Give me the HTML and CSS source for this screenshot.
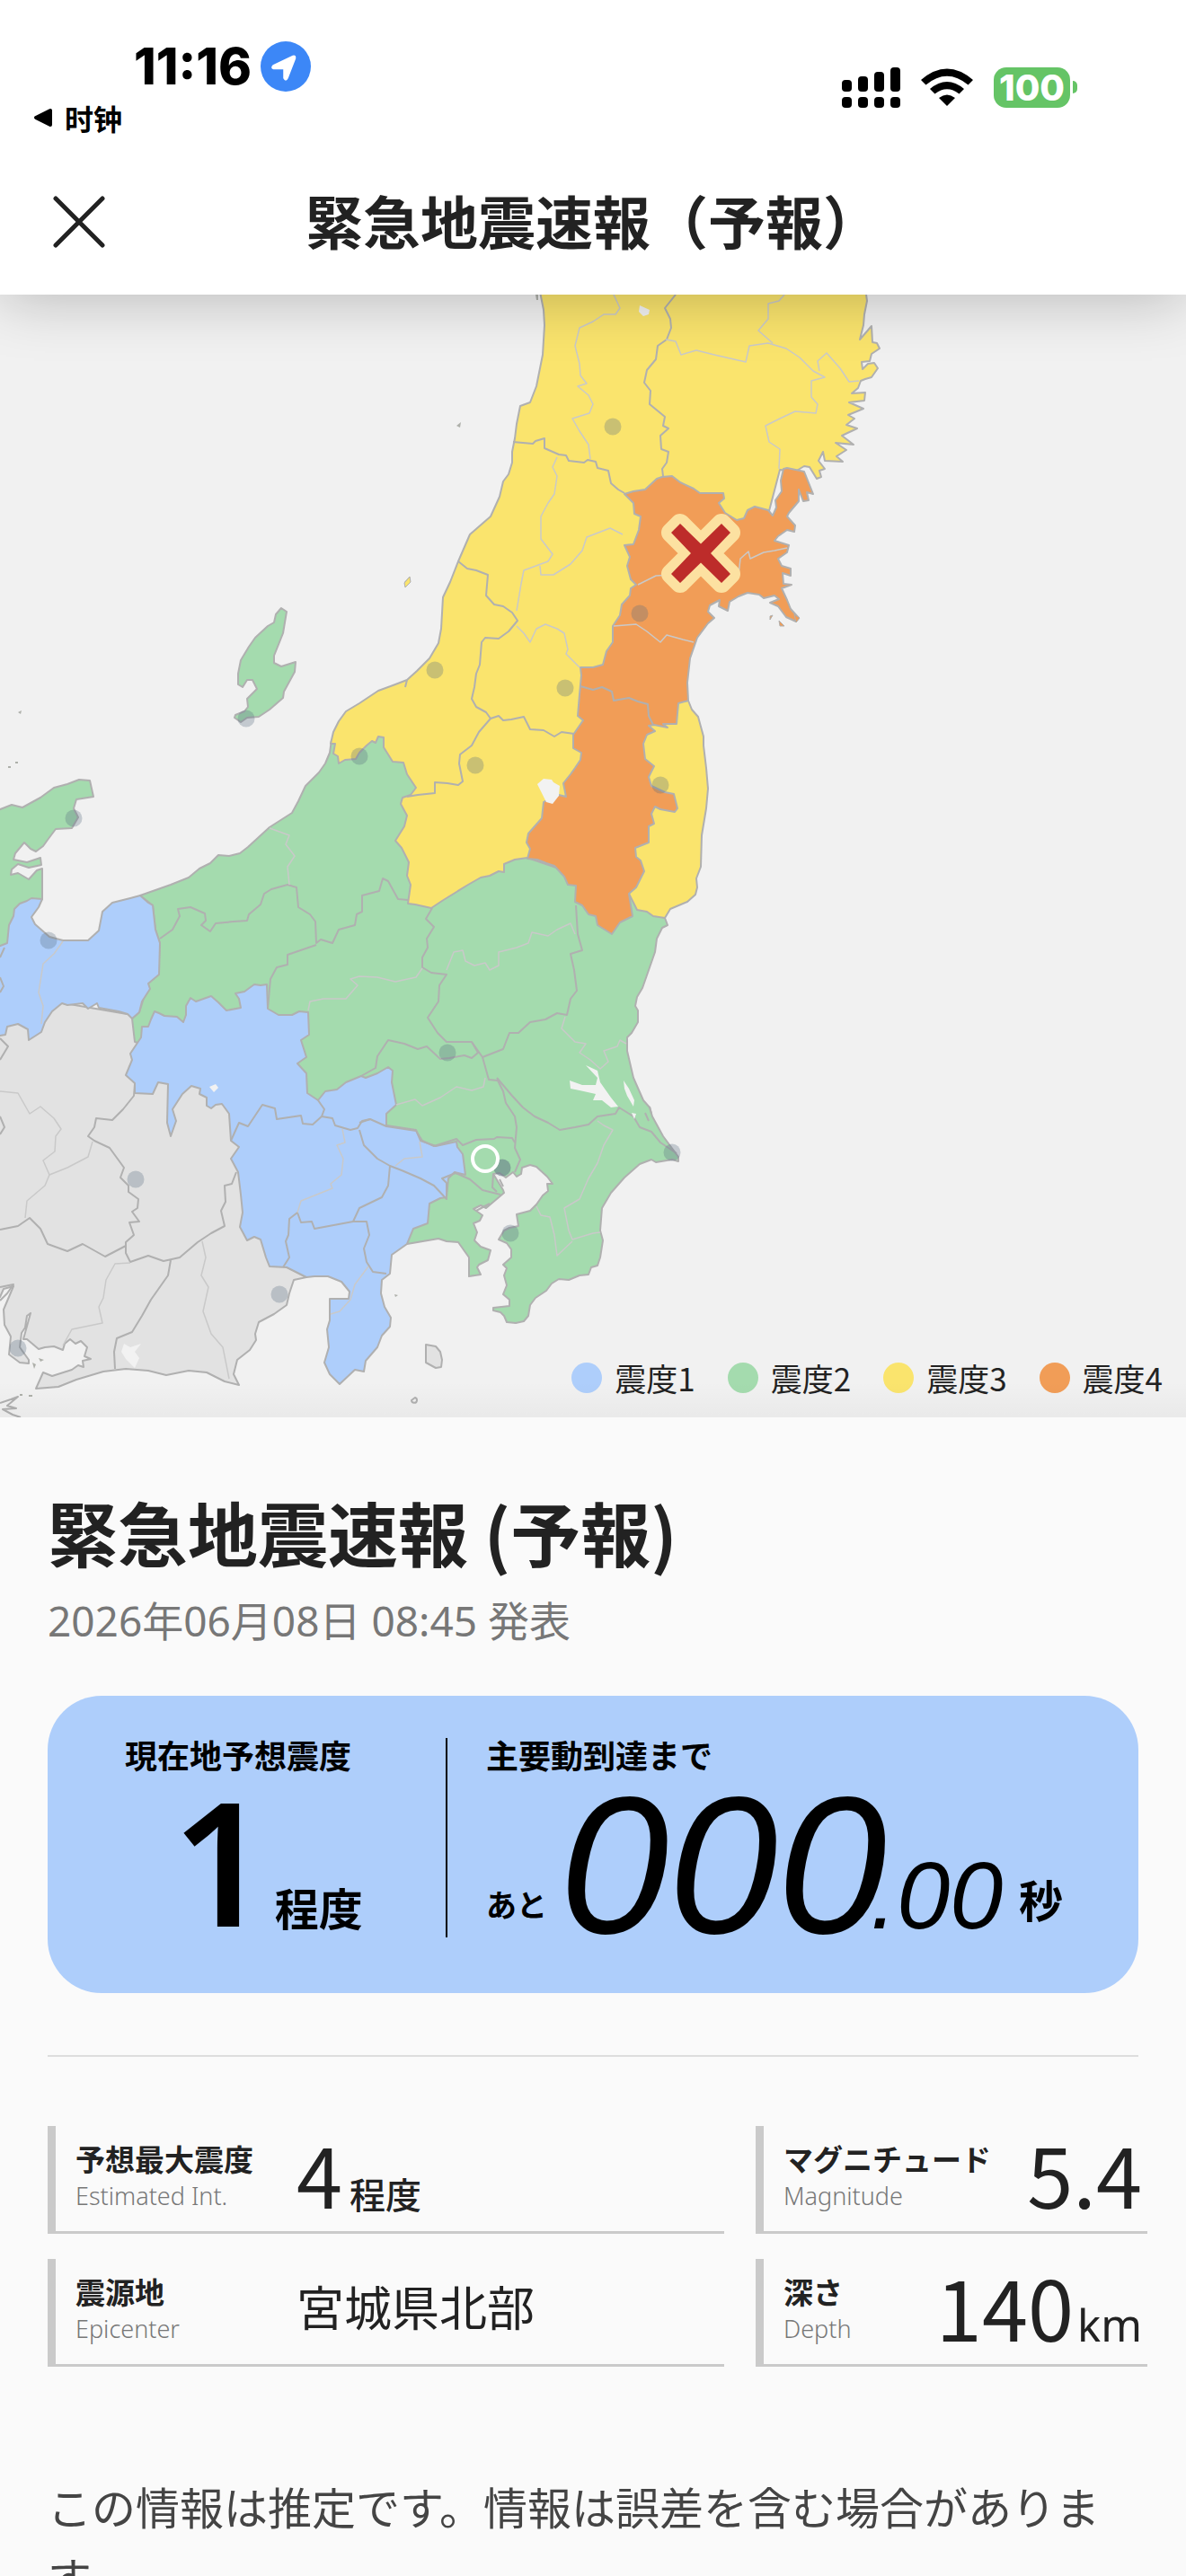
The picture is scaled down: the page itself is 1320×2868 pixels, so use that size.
FILE: index.html
```html
<!DOCTYPE html>
<html lang="ja">
<head>
<meta charset="utf-8">
<meta name="viewport" content="width=device-width, initial-scale=1">
<title>緊急地震速報（予報）</title>
<link rel="stylesheet" href="styles.css">
</head>
<body>
<div class="app">
  <header class="top">
    <div class="status">
      <div class="status-left">
        <div class="clock">
          <span class="time">11:16</span>
          <svg class="locate" viewBox="0 0 56 56" aria-hidden="true"><circle cx="28" cy="28" r="28" fill="#3c87f7"/><path d="M14 27 L36 16.500 Q39 15.500 38.500 19 L30 41 Q28 45 26 41 V30.500 H14.500 Q11.500 29.500 14 27Z" fill="#fff" stroke="#fff" stroke-width="1.500"/></svg>
        </div>
        <a class="back" href="#" lang="zh-Hans"><svg class="back-arrow" viewBox="0 0 22 22" aria-hidden="true"><path d="M3 11 L19 3 V19Z" stroke="#000" stroke-width="4" stroke-linejoin="round"/></svg>时钟</a>
      </div>
      <div class="status-right">
        <svg class="signal" viewBox="0 0 65 45" aria-hidden="true"><rect y="14" width="11" height="13" rx="4"/><rect x="18" y="10" width="11" height="17" rx="4"/><rect x="36" y="5" width="11" height="22" rx="4"/><rect x="54" width="11" height="27" rx="4"/><rect y="33" width="11" height="12" rx="4"/><rect x="18" y="33" width="11" height="12" rx="4"/><rect x="36" y="33" width="11" height="12" rx="4"/><rect x="54" y="33" width="11" height="12" rx="4"/></svg>
        <svg class="wifi" viewBox="0 0 58 43" aria-hidden="true"><path d="M0 13 Q29 -12 58 13 L52.500 18.500 Q29 -1 5.500 18.500Z"/><path d="M10 23 Q29 7 48 23 L42.500 28.500 Q29 18 15.500 28.500Z"/><path d="M20 33 Q29 26 38 33 L29 42Z"/></svg>
        <div class="battery"><span class="battery-level">100</span><span class="battery-tip"></span></div>
      </div>
    </div>
    <div class="titlebar">
      <button class="close" type="button" aria-label="閉じる"><svg viewBox="0 0 60 60" aria-hidden="true"><path d="M4 4 L56 56 M56 4 L4 56" stroke="#222" stroke-width="5" stroke-linecap="round"/></svg></button>
      <div class="title">緊急地震速報（予報）</div>
    </div>
  </header>

  <section class="map" aria-label="震度マップ">
    <svg class="map-canvas" viewBox="0 328 1320 1250" fill="none" stroke-linejoin="round" aria-hidden="true">
      <g stroke="#b0b0b0" stroke-width="2">
        <path fill="#e2e2e2" d="M-5 1130 60 1115 147 1130 250 1170 290 1230 290 1300 300 1400 341 1422 327 1425 322 1440 319 1453 305 1463 288 1472 284 1485 285 1492 278 1503 264 1514 260 1530 266 1542 250 1538 230 1528 210 1526 185 1531 165 1526 140 1524 115 1527 85 1536 65 1544 40 1546 48 1528 58 1532 80 1525 87 1520 93 1522 92 1515 101 1513 94 1510 97 1500 90 1493 84 1496 78 1491 72 1496 70 1503 60 1499 50 1500 43 1502 30 1491 26 1491 34 1462 30 1465 28 1478 24 1484 22 1500 32 1514 32 1518 22 1517 10 1508 12 1488 5 1475 4 1458 15 1432 4 1435 0 1444 -5 1444Z"/>
        <path fill="#a4dbae" d="M156 997 190 985 210 977 222 967 234 961 243 952 255 953 267 950 276 943 300 921 325 905 332 892 340 875 355 860 362 850 367 838 369 824 430 800 600 940 700 990 740 1022 743 1030 737 1033 731 1045 729 1060 722 1080 715 1100 709 1110 707 1120 710 1125 710 1138 703 1150 698 1155 698 1170 705 1200 716 1225 723 1233 726 1243 738 1265 755 1288 755 1293 748 1291 730 1294 725 1291 712 1296 695 1311 680 1328 670 1345 668 1370 671 1381 668 1400 665 1409 658 1411 655 1419 645 1420 633 1425 622 1424 614 1429 608 1437 596 1445 590 1453 588 1465 583 1471 574 1473 564 1472 561 1465 557 1461 549 1459 549 1456 567 1454 567 1447 560 1441 564 1431 561 1420 564 1412 560 1408 569 1400 569 1391 564 1384 555 1380 561 1370 567 1367 577 1365 575 1352 590 1348 597 1341 604 1331 610 1326 609 1318 615 1318 609 1310 597 1299 590 1297 581 1300 580 1307 575 1310 571 1305 563 1311 556 1306 549 1307 560 1325 561 1328 554 1334 541 1345 535 1342 527 1346 537 1353 534 1359 527 1362 531 1372 528 1381 535 1388 546 1392 543 1403 533 1408 531 1411 535 1419 522 1421 522 1400 510 1383 497 1382 488 1379 453 1385 400 1380 300 1200 150 1160 147 1134 155 1127 165 1095 176 1085 178 1050 173 1035 170 1008Z"/>
        <path fill="#aecefb" d="M158 1143 165 1143 168 1135 172 1126 177 1128 183 1131 197 1132 204 1138 207 1130 207 1120 212 1111 218 1115 235 1109 243 1116 252 1125 268 1122 266 1112 262 1106 272 1104 283 1096 290 1097 297 1096 298 1123 310 1130 325 1130 333 1126 343 1127 344 1152 335 1158 341 1177 331 1184 341 1195 342 1217 354 1225 362 1215 375 1213 385 1205 402 1198 407 1200 420 1195 432 1188 437 1192 436 1205 441 1230 430 1240 430 1253 463 1258 468 1270 485 1276 508 1271 509 1277 515 1285 518 1308 506 1305 499 1312 497 1333 490 1334 478 1340 476 1362 460 1368 453 1385 436 1397 434 1418 425 1425 424 1440 428 1455 435 1467 434 1477 425 1487 420 1500 407 1515 405 1527 395 1525 378 1541 367 1530 361 1517 366 1500 364 1480 367 1470 367 1446 388 1446 389 1438 380 1427 365 1421 350 1421 341 1422 319 1411 300 1410 296 1400 290 1380 283 1377 275 1381 267 1366 270 1350 268 1330 265 1305 257 1290 266 1277 257 1270 255 1240 247 1229 240 1230 235 1234 230 1231 230 1222 222 1218 223 1212 213 1209 203 1218 192 1235 196 1248 190 1265 186 1250 187 1207 176 1205 170 1218 150 1217 150 1206 140 1197 147 1180 145 1173 157 1155Z"/>
        <path fill="#a4dbae" d="M-5 903 13 896 25 899 45 888 60 877 75 873 88 868 100 869 102 878 104 887 85 890 82 900 87 910 80 922 62 923 53 935 48 942 40 948 34 945 27 938 17 950 15 957 30 960 45 955 46 963 32 966 20 962 13 968 12 974 20 972 32 979 41 969 47 967 47 1001 30 1025 8 1055 -5 1060Z"/>
        <path fill="#aecefb" d="M47 1001 43 1010 35 1021 39 1029 55 1043 70 1047 98 1047 110 1036 114 1015 125 1005 145 1000 156 997 165 1005 170 1008 173 1035 178 1050 177 1085 165 1095 167 1101 158 1115 155 1127 147 1134 142 1129 132 1126 110 1122 108 1117 98 1123 92 1117 75 1119 69 1117 58 1126 50 1138 46 1149 32 1158 31 1146 20 1140 8 1143 6 1152 -5 1154 -5 1055 8 1050 10 1030 15 1020 16 1012 22 1006 30 1003 35 1000Z"/>
        <path fill="#fae46d" d="M600 320 605 345 606 362 604 395 597 430 590 448 579 452 575 472 573 488 570 503 570 515 566 528 560 536 556 553 546 575 523 595 510 625 501 648 493 665 491 700 488 716 478 733 464 747 453 757 440 762 421 769 400 783 385 792 377 803 371 815 368 828 373 828 371 839 376 842 377 850 384 846 396 845 400 838 408 830 414 825 418 827 421 820 427 821 427 832 437 848 449 849 453 862 463 877 457 885 448 888 446 895 453 908 450 920 440 936 447 944 455 960 453 975 457 985 454 1006 462 1007 480 1011 492 1003 500 998 521 985 535 977 545 975 555 970 561 971 561 962 573 957 587 955 660 980 700 995 709 1013 720 1015 727 1020 740 1022 746 1012 765 1004 774 996 776 988 775 978 780 965 781 930 786 900 788 878 786 855 783 830 783 820 777 798 770 790 766 780 755 770 750 690 840 630 868 523 885 525 895 519 901 520 909 533 914 531 912 524 918 522 911 513 916 503 918 513 938 514 931 508 942 501 930 493 950 495 937 485 954 477 942 473 951 466 944 462 961 455 945 448 962 446 963 437 948 438 955 432 958 424 963 422 970 420 977 410 973 404 966 405 960 411 959 403 968 402 970 394 979 388 976 382 971 381 970 363 957 378 961 362 962 350 965 335 963 320Z"/>
        <path fill="#a4dbae" d="M313 677 319 681 315 705 305 730 305 738 313 742 329 737 328 748 316 770 315 777 300 790 288 798 275 799 268 804 261 799 262 796 272 792 276 787 275 778 286 767 281 757 275 757 270 765 265 762 265 750 268 735 277 720 284 710 298 697 305 693 307 684Z"/>
        <path fill="#f19d57" d="M695 550 705 547 718 545 731 533 737 531 748 530 757 537 772 544 779 549 805 549 806 555 800 560 807 571 820 579 828 577 832 568 840 564 855 568 860 574 864 565 863 557 870 547 869 535 872 522 876 521 895 525 899 535 905 550 898 548 900 557 894 558 889 545 889 558 878 571 876 575 885 585 884 592 876 590 866 597 862 602 878 607 876 615 866 622 870 630 880 633 880 641 871 638 872 650 881 651 870 655 876 668 880 678 889 688 886 692 875 687 866 675 857 671 867 667 862 663 850 666 845 662 832 660 822 664 812 670 810 680 800 675 801 668 790 674 788 681 795 688 788 694 776 710 768 733 765 760 766 780 755 783 753 806 738 806 743 810 728 807 722 808 729 814 720 818 716 828 718 845 728 853 722 865 725 875 740 882 750 884 754 900 751 904 735 901 729 898 725 906 728 917 722 920 722 938 707 944 708 954 713 958 717 970 708 988 700 995 704 1020 690 1027 681 1040 665 1030 663 1020 655 1018 648 1008 640 1004 641 986 632 985 628 976 617 964 608 961 598 957 587 956 590 945 586 938 588 928 603 911 605 893 615 887 622 885 630 887 627 872 635 862 640 855 646 846 647 838 638 833 638 818 649 802 643 797 645 773 647 752 646 743 660 743 671 740 675 725 682 715 682 697 690 685 692 673 701 663 702 655 708 651 702 645 698 630 701 620 695 607 705 606 711 590 713 575 706 572 705 560Z"/>
        <path fill="#e2e2e2" d="M474 1497 485 1499 490 1505 492 1514 491 1522 485 1523 474 1517Z"/>
      </g>
      <g stroke="#b0b0b0" stroke-width="2">
        <path d="M752 328 740 343 746 355 747 365 742 378 732 385 730 400 720 412 717 426 724 435 723 450 740 464 738 474 744 477 735 485 736 500 744 503 742 515 737 522 738 530"/>
        <path d="M571 492 593 494 596 491 606 488 606 499 622 506 630 507 633 513 650 515 654 512 663 514 665 521 677 524 680 538 688 545 695 549"/>
        <path d="M510 625 520 633 530 635 543 640 541 663 550 673 560 675 570 682 576 691 566 703 555 711 540 710 536 715 534 740 530 750 528 765 525 778 530 787 541 793 546 800 555 797 560 802 569 801 583 798 590 812 605 813 617 820 625 815 639 817M546 800 533 815 525 830 512 840 511 850 515 870 510 874 498 872 484 871 484 883 465 885 453 887"/>
        <path d="M646 764 660 768 670 765 681 770 683 780 700 777 710 781 721 784 722 797 727 807"/>
        <path d="M178 1045 192 1035 200 1020 198 1012 212 1010 228 1017 229 1025 224 1030 234 1037 240 1028 260 1026 275 1025 277 1018 290 1007 294 995 302 990 320 985 330 988 332 1010 345 1018 351 1026 352 1050 357 1046 370 1050 377 1035 395 1030 397 1018 403 1015 403 997 422 992 426 978 432 981 443 1001 454 1002"/>
        <path d="M352 1052 320 1063 320 1074 308 1077 301 1090 298 1123M481 1011 474 1023 483 1032 475 1045 476 1055 470 1066 470 1077 480 1083 497 1085 489 1097 488 1115 476 1133 487 1150 497 1160 525 1160 532 1172 525 1178 517 1175 500 1178 490 1179 475 1165 465 1168 450 1162 432 1158 420 1176 418 1189 402 1198"/>
        <path d="M525 1160 537 1177 560 1168 567 1150 577 1150 590 1138 607 1135 620 1128 631 1130 635 1112 642 1103 639 1080 635 1062 648 1058 643 1040 641 1008M537 1177 544 1202 554 1203 560 1215 563 1228 573 1243 575 1255 573 1278 579 1291 573 1305"/>
        <path d="M553 1200 570 1220 582 1233 595 1243 610 1250 623 1258 640 1255 655 1252 665 1243 685 1240 689 1233 705 1243 712 1255 725 1260 735 1272 753 1284M400 1250 412 1246 430 1254 463 1259 470 1270 483 1276 508 1268 515 1275 530 1269 550 1268 553 1266 570 1267 573 1272"/>
        <path d="M400 1258 405 1275 420 1290 434 1298 447 1303 468 1312 483 1320 497 1335 497 1317 492 1312 507 1306 523 1313 537 1325 557 1330M434 1298 432 1320 425 1333 400 1345 393 1360 350 1368 347 1360 335 1361 331 1350 322 1357 321 1375 318 1382 322 1400 315 1411M393 1360 408 1360 411 1375 405 1390 408 1405 415 1416 430 1418"/>
        <path d="M257 1270 266 1250 276 1254 292 1230 306 1234 308 1246 335 1242 337 1251 348 1252 358 1243 361 1235 354 1225M358 1243 370 1245 373 1253 390 1258 398 1256 403 1248 412 1246"/>
        <path d="M150 1207 149 1220 137 1235 125 1247 107 1245 105 1255 98 1265 105 1270 122 1278 138 1300 134 1311 143 1320 143 1327 154 1335 153 1345 147 1349 155 1360 144 1361 149 1375 140 1383 140 1395 145 1405 165 1398 182 1404 200 1400 220 1383 235 1373 250 1365 246 1348 251 1338 250 1320 258 1318 263 1305M0 1369 20 1365 33 1356 45 1368 53 1385 75 1393 92 1385 117 1399 140 1387M190 1403 187 1420 168 1447 158 1465 147 1483 130 1490 127 1505 128 1524M0 1180 9 1165 0 1156M0 1243 5 1255 0 1263M5 1055 0 1066M0 1088 4 1098 0 1105"/>
      </g>
      <g stroke="#c9c9c9" stroke-width="1.500">
        <path d="M683 328 690 343 685 350 672 350 660 358 645 365 640 385 645 405 646 418 653 427 643 430 655 440 660 450 656 460 637 466 645 480 655 495 657 511M741 378 752 380 758 395 775 390 795 395 830 403 834 385 855 382 875 388 890 398 905 413 918 420 903 424 903 442 910 450 908 460 885 458 868 466 852 474 856 492 868 500 867 522M873 328 867 335 855 338 855 355 844 368 860 382M912 413 910 402 920 393 935 410 945 425 956 424M620 509 615 520 620 530 617 550 610 560 602 575 602 600 615 617 610 625 583 635 580 650 575 680M601 630 602 640 616 640 635 628 648 613 653 598 679 588 693 595M575 697 583 705 590 715 597 700 607 695 620 700 628 705 632 723 630 728 645 743M710 651 730 641 745 640M822 640 824 622 833 614 835 622 850 615 862 613 876 610M683 697 708 695 720 703 735 715 742 707 760 712 772 715"/>
        <path d="M300 922 322 930 318 940 328 953 320 965 322 985M343 1125 345 1115 360 1112 385 1112 398 1097 390 1090 400 1087 420 1088 440 1093 463 1088 470 1078M497 1080 505 1060 515 1058 518 1070 528 1075 540 1072 545 1080 555 1075 555 1060 575 1055 588 1050 592 1038 610 1042 620 1035 635 1028 640 1040M441 1230 462 1224 470 1231 490 1222 508 1210 525 1214 538 1210 540 1200M629 1132 625 1145 640 1160 652 1162 645 1172 657 1180 668 1190 677 1182 672 1170 687 1165 690 1158 697 1162M665 1248 672 1253 682 1258 672 1275 665 1295 655 1312 645 1335 628 1345 633 1370 637 1380 660 1373 668 1372M637 1382 620 1398 617 1375 612 1355 602 1353 597 1343"/>
        <path d="M70 1048 60 1062 48 1073 43 1105 48 1120 46 1140M381 1257 384 1272 375 1275 382 1290 380 1308 368 1318 370 1323 335 1337 331 1350M410 1410 395 1430 390 1447 378 1460 368 1463M467 1271 470 1288 450 1290 440 1298M0 1215 20 1217 33 1240 45 1232 60 1245 68 1257 62 1265 61 1282 48 1292 55 1308 50 1320 30 1337 28 1356M55 1308 75 1300 98 1288 103 1271M225 1382 229 1400 224 1420 232 1433 226 1460 235 1485 248 1500 255 1535M145 1406 128 1407 118 1425 115 1445 110 1455 114 1473 80 1480 70 1498"/>
      </g>
      <g fill="#f2f2f2">
        <path d="M652 1186 665 1192 668 1205 680 1222 688 1232 680 1233 670 1225 660 1225 663 1218 645 1214 635 1212 634 1203 648 1208 663 1208 665 1200ZM694 1203 700 1212 706 1225 705 1232 698 1220 695 1212ZM703 1239 708 1240 706 1246ZM598 873 605 867 614 868 616 871 623 875 622 886 615 895 608 893ZM233 1210 240 1207 243 1211 238 1216ZM712 340 723 345 722 350 716 352 711 347ZM138 1496 145 1500 157 1496 150 1505 155 1512 150 1523 140 1513 135 1505Z"/>
      </g>
      <g fill="#aeb0aa">
        <path d="M508 474 513 470 512 476ZM450 648 456 642 457 647 451 654ZM20 793l4-2-1 4ZM9 853h3v2h-3ZM17 848h3v2h-3ZM439 1441l4 1-3 2ZM595 322h4v12h-2ZM36 1517l4 2-2 5ZM43 1512l6 2-4 2ZM22 1552h3v2h-3ZM32 1553h4v2h-4Z"/>
        <path fill="#f19d57" stroke="#b0b0b0" d="M884 684 890 688 886 693ZM867 691 873 697 868 697ZM857 686 860 685 857 690Z"/>
        <path fill="#fae46d" stroke="#b0b0b0" d="M450 649 456 642 457 648 451 654Z"/>
      </g>
      <g stroke="#b0b0b0" stroke-width="2"><path d="M0 1562 12 1558 20 1555 8 1565 18 1568 3 1569 14 1575 23 1578M458 1559a3 3 0 1 0 4-3ZM549 1307 548 1322 553 1327M556 1313 560 1321M530 1348 545 1340M718 1239 722 1248M0 1433 15 1430 8 1440 0 1448M453 757 451 765M723 1232 725 1240"/></g>
      <g fill="#5a6d80" fill-opacity=".3">
        <circle cx="682" cy="475" r="9.500"/><circle cx="712" cy="683" r="9.500"/><circle cx="629" cy="766" r="9.500"/><circle cx="529" cy="852" r="9.500"/><circle cx="735" cy="874" r="9.500"/><circle cx="484" cy="746" r="9.500"/><circle cx="400" cy="842" r="9.500"/><circle cx="274" cy="800" r="9.500"/><circle cx="82" cy="911" r="9.500"/><circle cx="54" cy="1047" r="9.500"/><circle cx="151" cy="1313" r="9.500"/><circle cx="311" cy="1441" r="9.500"/><circle cx="20" cy="1501" r="9.500"/><circle cx="498" cy="1172" r="9.500"/><circle cx="748" cy="1283" r="9.500"/><circle cx="559" cy="1300" r="9.500" fill-opacity=".5"/><circle cx="568" cy="1373" r="9.500"/>
      </g>
      <circle cx="540" cy="1290" r="14" stroke="#fff" stroke-width="4"/>
      <g transform="translate(780 616)">
        <path d="M-23 -33 0 -10 23 -33 33 -23 10 0 33 23 23 33 0 10 -23 33 -33 23 -10 0 -33 -23Z" fill="#fce1a1" stroke="#fce1a1" stroke-width="22"/>
        <path d="M-23 -33 0 -10.500 23 -33 33 -23 11 0 33 23 23 33 0 10.500 -23 33 -33 23 -11 0 -33 -23Z" fill="#bd2c2a"/>
      </g>
    </svg>
    <ul class="legend">
      <li><i class="dot dot-1"></i>震度1</li>
      <li><i class="dot dot-2"></i>震度2</li>
      <li><i class="dot dot-3"></i>震度3</li>
      <li><i class="dot dot-4"></i>震度4</li>
    </ul>
  </section>

  <main class="sheet">
    <h1>緊急地震速報 (予報)</h1>
    <p class="issued">2026年06月08日 08:45 発表</p>

    <section class="card">
      <div class="here">
        <h2>現在地予想震度</h2>
        <div class="row"><span class="level">1</span><span class="level-unit">程度</span></div>
      </div>
      <div class="arrival">
        <h2>主要動到達まで</h2>
        <div class="row"><span class="ato">あと</span><span class="seconds">000</span><span class="fraction">.00</span><span class="byou">秒</span></div>
      </div>
    </section>

    <hr>

    <dl class="details">
      <div class="cell"><dt>予想最大震度<small>Estimated Int.</small></dt><dd><b class="num">4</b><span class="about">程度</span></dd></div>
      <div class="cell end"><dt>マグニチュード<small>Magnitude</small></dt><dd><b class="num">5.4</b></dd></div>
      <div class="cell"><dt>震源地<small>Epicenter</small></dt><dd class="place">宮城県北部</dd></div>
      <div class="cell end"><dt>深さ<small>Depth</small></dt><dd><b class="num">140</b><span class="km">km</span></dd></div>
    </dl>

    <p class="note">この情報は推定です。情報は誤差を含む場合があります</p>
  </main>
</div>
</body>
</html>
```
FILE: styles.css
```css
* { box-sizing: border-box; }

body {
  margin: 0;
  background: #fafafa;
  color: #222;
  font-family: "Noto Sans CJK JP", sans-serif;
}

h1, h2, p, ul, dl, dd { margin: 0; padding: 0; }
svg { display: block; }

.app {
  display: flex;
  flex-direction: column;
  height: 100vh;
  overflow: hidden;
}

.top {
  position: relative;
  z-index: 1;
  flex: none;
  background: #fff;
  box-shadow: 0 4px 64px rgba(0, 0, 0, .24);
}

/* Status bar */
.status {
  display: flex;
  justify-content: space-between;
  height: 166px;
  padding: 44px 121px 0 37px;
  color: #000;
}
.clock {
  display: flex;
  align-items: center;
  gap: 10px;
  height: 60px;
  padding-left: 112px;
}
.time { font: 800 56px/60px Inter, sans-serif; }
.locate { width: 56px; height: 56px; }
.back {
  display: flex;
  align-items: center;
  gap: 13px;
  height: 54px;
  color: #000;
  font: 600 32px/40px "Noto Sans CJK SC", sans-serif;
  text-decoration: none;
}
.back-arrow { width: 22px; height: 22px; }
.status-right {
  display: flex;
  align-items: center;
  gap: 23px;
  height: 106px;
}
.signal { width: 65px; height: 45px; }
.wifi { width: 58px; height: 43px; }
.battery { display: flex; align-items: center; gap: 3px; }
.battery-level {
  width: 85px;
  border-radius: 14px;
  background: #65c466;
  color: #fff;
  font: 800 40px/45px Inter, sans-serif;
  text-align: center;
}
.battery-tip {
  width: 5px;
  height: 14px;
  border-radius: 0 7px 7px 0;
  background: #65c466;
}

/* Title bar */
.titlebar {
  display: grid;
  grid-template-columns: 118px 1fr 118px;
  align-items: center;
  height: 162px;
}
.close {
  justify-self: end;
  width: 60px;
  height: 60px;
  padding: 0;
  border: 0;
  background: none;
}
.title {
  padding-bottom: 6px;
  font-size: 64px;
  font-weight: 600;
  line-height: 80px;
  text-align: center;
  white-space: nowrap;
}

/* Map */
.map { position: relative; flex: none; background: #f1f1f1; }
.map::after {
  content: "";
  position: absolute;
  inset: auto 0 0;
  height: 40px;
  background: linear-gradient(transparent, rgba(0, 0, 0, .03));
}
.map-canvas { width: 100%; height: auto; }
.legend {
  position: absolute;
  right: 26px;
  bottom: 20px;
  display: flex;
  gap: 36px;
  list-style: none;
  font-size: 35px;
  line-height: 48px;
}
.legend li { display: flex; align-items: center; gap: 14px; }
.dot { width: 34px; height: 34px; border-radius: 50%; }
.dot-1 { background: #aecefb; }
.dot-2 { background: #a4dbae; }
.dot-3 { background: #fae46d; }
.dot-4 { background: #f19d57; }

/* Details sheet */
.sheet {
  flex: 1;
  min-height: 0;
  padding: 79px 53px 0;
  overflow: hidden;
}
h1 { font-size: 78px; font-weight: 600; line-height: 96px; }
.issued {
  margin-top: 21px;
  color: #777;
  font-size: 46px;
  line-height: 60px;
  font-family: "Noto Sans", "Noto Sans CJK JP", sans-serif;
}

.card {
  display: flex;
  margin-top: 54px;
  padding: 47px 0 62px;
  border-radius: 60px;
  background: #aecefb;
  color: #000;
}
.card h2 { font-size: 36px; font-weight: 600; line-height: 36px; }
.here, .arrival {
  display: flex;
  flex-direction: column;
  justify-content: space-between;
  height: 222px;
}
.here {
  width: 445px;
  padding-left: 86px;
  border-right: 2px solid #000;
}
.arrival { padding-left: 43px; }
.row { display: flex; align-items: flex-end; line-height: 1; }
.level {
  margin-left: 52px;
  padding-bottom: 11px;
  font: 600 192px/150px "Noto Sans", sans-serif;
}
.level-unit { padding-bottom: 10px; margin-left: 5px; font-size: 49px; font-weight: 600; }
.ato { padding-bottom: 20px; font-size: 34px; font-weight: 600; }
.seconds { margin-left: 14px; font: italic 218px/160px "Liberation Sans", sans-serif; }
.fraction { margin: 0 18px 0 -18px; padding-bottom: 7px; font: italic 106px/80px "Liberation Sans", sans-serif; }
.byou { padding-bottom: 19px; font-size: 49px; font-weight: 600; }

hr { margin: 69px 0 77px; border: 0; border-top: 2px solid #ddd; }

.details {
  display: grid;
  grid-template-columns: 753fr 436fr;
  gap: 28px 35px;
  margin-right: -10px;
}
.cell {
  display: flex;
  height: 120px;
  padding: 12px 6px 0 22px;
  border-left: 9px solid #cacaca;
  border-bottom: 3px solid #cacaca;
}
dt {
  width: 246px;
  font-size: 33px;
  font-weight: 600;
  line-height: 48px;
  white-space: nowrap;
}
.end { justify-content: space-between; }
.end dt { width: auto; }
dt small {
  display: block;
  color: #777;
  font: 300 27px/36px "Noto Sans", sans-serif;
}
dd { display: flex; align-items: baseline; line-height: 80px; }
.num { font-size: 92px; font-weight: 400; line-height: 80px; }
.about { margin-left: 8px; font-size: 40px; font-weight: 500; }
.place { font-size: 53px; }
.km { margin-left: 4px; font: 400 49px/80px "Noto Sans", sans-serif; }

.note { margin-top: 116px; color: #444; font-size: 49px; line-height: 78px; }
```
